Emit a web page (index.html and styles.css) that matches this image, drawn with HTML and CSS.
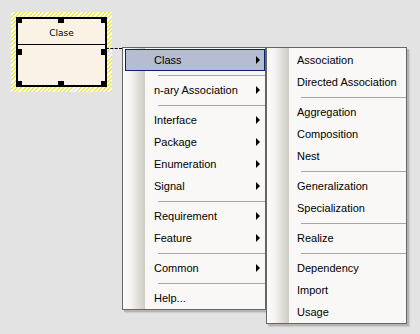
FILE: index.html
```html
<!DOCTYPE html>
<html lang="en">
<head>
    <meta charset="UTF-8">
    <title>Class context menu</title>
    <link rel="stylesheet" href="styles.css">
</head>
<body>
    <div class="canvas">
        <div class="selection">
            <div class="class-box">
                <div class="class-name">Clase</div>
                <div class="class-body"></div>
                <span class="handle h-tl"></span>
                <span class="handle h-tm"></span>
                <span class="handle h-tr"></span>
                <span class="handle h-ml"></span>
                <span class="handle h-mr"></span>
                <span class="handle h-bl"></span>
                <span class="handle h-bm"></span>
                <span class="handle h-br"></span>
            </div>
        </div>
        <div class="link-line"></div>

        <ul class="menu menu-main">
            <li class="item active has-sub">Class</li>
            <li class="sep"></li>
            <li class="item has-sub">n-ary Association</li>
            <li class="sep"></li>
            <li class="item has-sub">Interface</li>
            <li class="item has-sub">Package</li>
            <li class="item has-sub">Enumeration</li>
            <li class="item has-sub">Signal</li>
            <li class="sep"></li>
            <li class="item has-sub">Requirement</li>
            <li class="item has-sub">Feature</li>
            <li class="sep"></li>
            <li class="item has-sub">Common</li>
            <li class="sep"></li>
            <li class="item">Help...</li>
        </ul>

        <ul class="menu menu-sub">
            <li class="item">Association</li>
            <li class="item">Directed Association</li>
            <li class="sep"></li>
            <li class="item">Aggregation</li>
            <li class="item">Composition</li>
            <li class="item">Nest</li>
            <li class="sep"></li>
            <li class="item">Generalization</li>
            <li class="item">Specialization</li>
            <li class="sep"></li>
            <li class="item">Realize</li>
            <li class="sep"></li>
            <li class="item">Dependency</li>
            <li class="item">Import</li>
            <li class="item">Usage</li>
        </ul>
    </div>
</body>
</html>
```

FILE: styles.css
```css
* {
    margin: 0;
    padding: 0;
    box-sizing: border-box;
}

body {
    background: #e3e3e3;
    font-family: "Liberation Sans", Arial, sans-serif;
    font-size: 11px;
    color: #000;
}

.canvas {
    position: relative;
    width: 420px;
    height: 334px;
    overflow: hidden;
}

/* diagram node with its yellow selection frame */
.selection {
    position: absolute;
    left: 11px;
    top: 12px;
    width: 101px;
    height: 80px;
    padding: 5px;
    background: repeating-linear-gradient(135deg, #efeb4e 0 1.4px, #ffffff 1.4px 3px);
}

.class-box {
    position: relative;
    height: 100%;
    border: 2px solid #000;
    background: #faf3e5;
    display: flex;
    flex-direction: column;
}

.class-name {
    height: 26px;
    border-bottom: 1px solid #000;
    display: flex;
    align-items: center;
    justify-content: center;
    font-family: "DejaVu Sans", sans-serif;
    font-size: 9px;
    padding-top: 2px;
}

.class-body {
    flex: 1;
}

.handle {
    position: absolute;
    width: 6px;
    height: 6px;
    background: #000;
}

.h-tl { left: -2px; top: -2px; }
.h-tm { left: 40px; top: -2px; }
.h-tr { right: -2px; top: -2px; }
.h-ml { left: -2px; top: 30px; }
.h-mr { right: -2px; top: 30px; }
.h-bl { left: -2px; bottom: -2px; }
.h-bm { left: 40px; bottom: -2px; }
.h-br { right: -2px; bottom: -2px; }

.link-line {
    position: absolute;
    left: 106px;
    top: 48px;
    width: 16px;
    border-top: 1px dashed #000;
}

/* context menus */
.menu {
    position: absolute;
    top: 47px;
    list-style: none;
    border: 1px solid #666;
    padding-top: 1px;
    background:
        linear-gradient(90deg, #fcfcfb 0, #f4f3f1 8px, #cfcbc3 22px, transparent 22px),
        #f9f8f7;
    box-shadow: 2px 2px 0 #b4b4b4, 3px 3px 1px #cfcfcf;
}

.menu-main {
    left: 122px;
    width: 144px;
    z-index: 1;
}

.menu-sub {
    left: 266px;
    width: 141px;
    z-index: 2;
}

.item {
    position: relative;
    height: 22px;
    line-height: 22px;
    padding-left: 31px;
    white-space: nowrap;
}

.menu-sub .item {
    padding-left: 30px;
}

.item.active {
    margin-left: 2px;
    padding-left: 28px;
    background: #b6bdd2;
    border: 1px solid #0a246a;
    line-height: 20px;
}

.has-sub::after {
    content: "";
    position: absolute;
    right: 5px;
    top: 7px;
    border-left: 4px solid #000;
    border-top: 4px solid transparent;
    border-bottom: 4px solid transparent;
}

.item.active::after {
    right: 4px;
    top: 6px;
}

.sep {
    height: 8px;
    display: flex;
    align-items: center;
    padding-left: 35px;
}

.sep::before {
    content: "";
    flex: 1;
    border-top: 1px solid #a6a6a6;
}

.menu-sub .sep {
    padding-left: 34px;
}
```
